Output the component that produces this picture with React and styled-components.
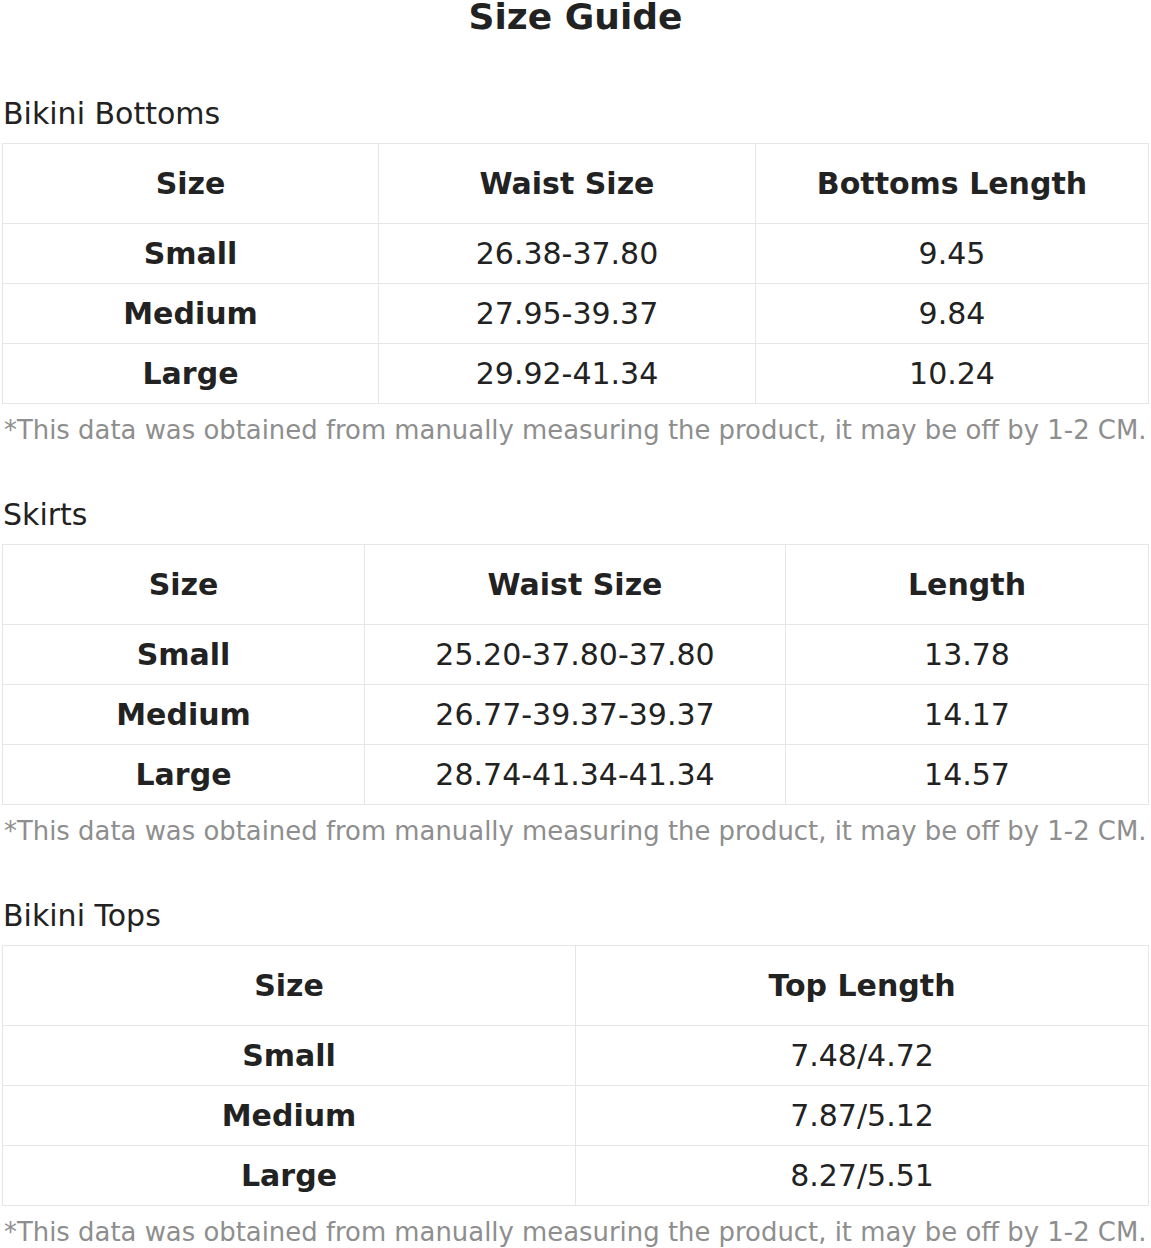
import React from 'react';
import styled, { createGlobalStyle } from 'styled-components';

const GlobalStyle = createGlobalStyle`
  body {
    margin: 0;
    background: #ffffff;
    color: #222222;
    font-family: "DejaVu Sans", "Liberation Sans", sans-serif;
  }
`;

const Page = styled.div`
  width: 1151px;
  box-sizing: border-box;
  padding: 0 2px 2px;
`;

const Title = styled.h1`
  margin: 0;
  font-size: 36px;
  line-height: 33px;
  font-weight: bold;
  text-align: center;
  color: #222222;
`;

const Section = styled.section`
  margin-top: ${({ $first }) => ($first ? '63px' : '52px')};
`;

const Heading = styled.h2`
  margin: 0 0 12px 1px;
  font-size: 30px;
  line-height: 35px;
  font-weight: normal;
  color: #222222;
`;

const Table = styled.table`
  width: 100%;
  table-layout: fixed;
  border-collapse: separate;
  border-spacing: 0;
  border-right: 1px solid #e6e6e6;
  border-bottom: 1px solid #e6e6e6;
`;

const Col = styled.col`
  width: ${({ $w }) => ($w ? `${$w}px` : 'auto')};
`;

const Row = styled.tr`
  height: ${({ $head }) => ($head ? '80px' : '60px')};
`;

const Cell = styled.td`
  padding: 0;
  border-top: 1px solid #e6e6e6;
  border-left: 1px solid #e6e6e6;
  text-align: center;
  vertical-align: middle;
  font-size: 30px;
  line-height: 35px;
  font-weight: ${({ $bold }) => ($bold ? 'bold' : 'normal')};
  color: #222222;
  white-space: nowrap;
`;

const Note = styled.p`
  margin: 11px 0 0 2px;
  font-size: 25.9px;
  line-height: 30px;
  color: #8e8e8e;
  white-space: nowrap;
`;

const NOTE = '*This data was obtained from manually measuring the product, it may be off by 1-2 CM.';

const guides = [
  {
    name: 'Bikini Bottoms',
    cols: [376, 377],
    head: ['Size', 'Waist Size', 'Bottoms Length'],
    rows: [
      ['Small', '26.38-37.80', '9.45'],
      ['Medium', '27.95-39.37', '9.84'],
      ['Large', '29.92-41.34', '10.24'],
    ],
  },
  {
    name: 'Skirts',
    cols: [362, 421],
    head: ['Size', 'Waist Size', 'Length'],
    rows: [
      ['Small', '25.20-37.80-37.80', '13.78'],
      ['Medium', '26.77-39.37-39.37', '14.17'],
      ['Large', '28.74-41.34-41.34', '14.57'],
    ],
  },
  {
    name: 'Bikini Tops',
    cols: [573],
    head: ['Size', 'Top Length'],
    rows: [
      ['Small', '7.48/4.72'],
      ['Medium', '7.87/5.12'],
      ['Large', '8.27/5.51'],
    ],
  },
];

const GuideTable = ({ guide }) => (
  <Table>
    <colgroup>
      {guide.head.map((h, i) => (
        <Col key={h} $w={guide.cols[i]} />
      ))}
    </colgroup>
    <thead>
      <Row $head>
        {guide.head.map((h) => (
          <Cell as="th" key={h} $bold>
            {h}
          </Cell>
        ))}
      </Row>
    </thead>
    <tbody>
      {guide.rows.map((row) => (
        <Row key={row[0]}>
          {row.map((value, i) => (
            <Cell key={i} $bold={i === 0}>
              {value}
            </Cell>
          ))}
        </Row>
      ))}
    </tbody>
  </Table>
);

const App = () => (
  <>
    <GlobalStyle />
    <Page>
      <Title>Size Guide</Title>
      {guides.map((guide, i) => (
        <Section key={guide.name} $first={i === 0}>
          <Heading>{guide.name}</Heading>
          <GuideTable guide={guide} />
          <Note>{NOTE}</Note>
        </Section>
      ))}
    </Page>
  </>
);

export default App;
